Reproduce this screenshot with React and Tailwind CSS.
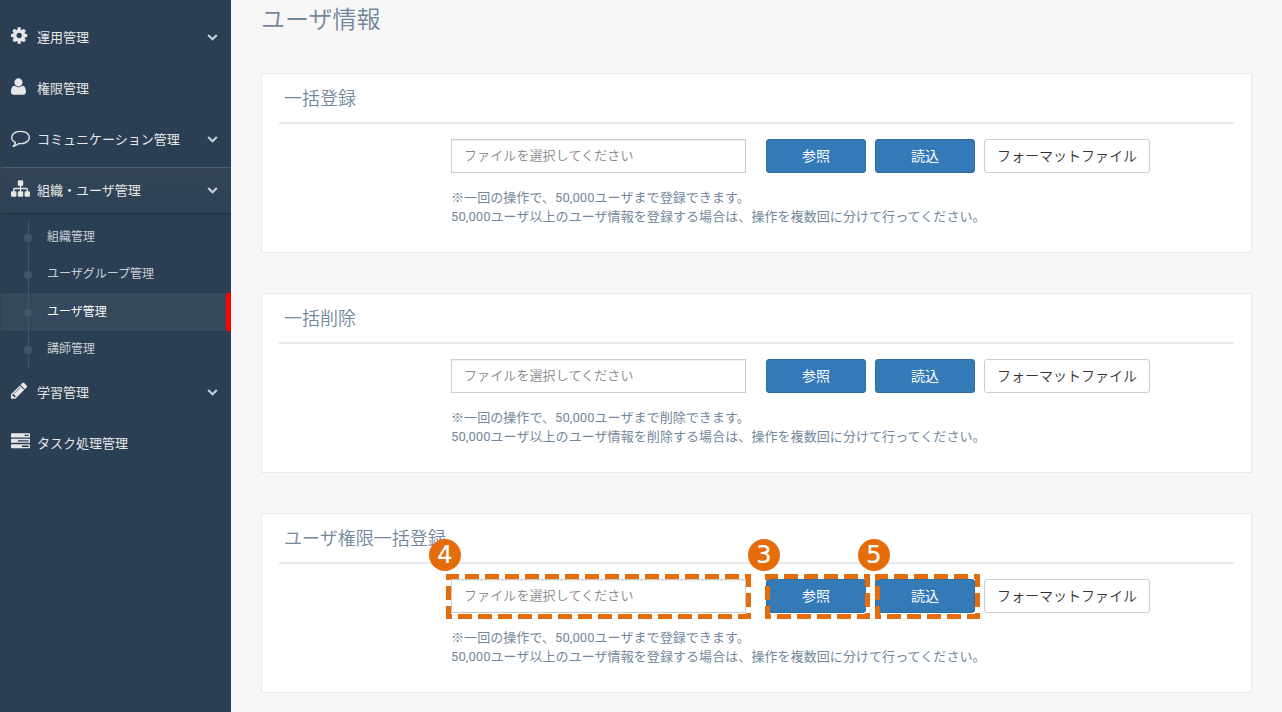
import { useState } from "react"

const icons = {
    cog: "M1152 896q0-106-75-181t-181-75-181 75-75 181 75 181 181 75 181-75 75-181zm512-109v222q0 12-8 23t-20 13l-185 28q-19 54-39 91 35 50 107 138 10 12 10 25t-9 23q-27 37-99 108t-94 71q-12 0-26-9l-138-108q-44 23-91 38-16 136-29 186-7 28-36 28h-222q-14 0-24.5-8.5t-11.5-21.5l-28-184q-49-16-90-37l-141 107q-10 9-25 9-14 0-25-11-126-114-165-168-7-10-7-23 0-12 8-23 15-21 51-66.5t54-70.5q-27-50-41-99l-183-27q-13-2-21-12.5t-8-23.5v-222q0-12 8-23t19-13l186-28q14-46 39-92-40-57-107-138-10-12-10-24 0-10 9-23 26-36 98.5-107.5t94.5-71.5q13 0 26 10l138 107q44-23 91-38 16-136 29-186 7-28 36-28h222q14 0 24.5 8.5t11.5 21.5l28 184q49 16 90 37l142-107q9-9 24-9 13 0 25 10 129 119 165 170 7 8 7 22 0 12-8 23-15 21-51 66.5t-54 70.5q26 50 41 98l183 28q13 2 21 12.5t8 23.5z",
    user: "M1600 1405q0 120-73 189.5t-194 69.5h-874q-121 0-194-69.5t-73-189.5q0-53 3.500-103.500t14-109 26.500-108.500 43-97.500 62-81 85.500-53.500 111.500-20q9 0 42 21.500t74.500 48 108 48 133.500 21.500 133.500-21.500 108-48 74.500-48 42-21.500q61 0 111.500 20t85.500 53.500 62 81 43 97.500 26.500 108.500 14 109 3.500 103.500zm-320-893q0 159-112.500 271.500t-271.500 112.500-271.500-112.500-112.500-271.500 112.500-271.500 271.500-112.500 271.500 112.500 112.500 271.500z",
    comment: "M896 384q-204 0-381.5 69.5t-282 187.5-104.5 255q0 112 71.5 213.5t201.5 175.5l87 50-27 96q-24 91-70 172 152-63 275-171l43-38 57 6q69 8 130 8 204 0 381.5-69.5t282-187.5 104.5-255-104.5-255-282-187.5-381.5-69.5zm896 512q0 174-120 321.5t-326 233-450 85.5q-70 0-145-8-198 175-460 242-49 14-114 22h-5q-15 0-27-10.5t-16-27.5v-1q-3-4-.5-12t2-10 4.5-9.5l6-9 7-8.5 8-9q7-8 31-34.5t34.5-38 31-39.5 32.5-51 27-59 26-76q-157-89-247.5-220t-90.5-281q0-174 120-321.5t326-233 450-85.5 450 85.5 326 233 120 321.5z",
    sitemap: "M1792 1248v320q0 40-28 68t-68 28h-320q-40 0-68-28t-28-68v-320q0-40 28-68t68-28h96v-192h-512v192h96q40 0 68 28t28 68v320q0 40-28 68t-68 28h-320q-40 0-68-28t-28-68v-320q0-40 28-68t68-28h96v-192h-512v192h96q40 0 68 28t28 68v320q0 40-28 68t-68 28h-320q-40 0-68-28t-28-68v-320q0-40 28-68t68-28h96v-192q0-52 38-90t90-38h512v-192h-96q-40 0-68-28t-28-68v-320q0-40 28-68t68-28h320q40 0 68 28t28 68v320q0 40-28 68t-68 28h-96v192h512q52 0 90 38t38 90v192h96q40 0 68 28t28 68z",
    pencil: "M491 1536l91-91-235-235-91 91v107h128v128h107zm523-928q0-22-22-22-10 0-17 7l-542 542q-7 7-7 17 0 22 22 22 10 0 17-7l542-542q7-7 7-17zm-54-192l416 416-832 832h-416v-416zm683 96q0 53-37 90l-166 166-416-416 166-165q36-38 90-38 53 0 91 38l235 234q37 39 37 91z",
    tasks: "M1024 1408h640v-128h-640v128zm-384-512h1024v-128h-1024v128zm640-512h384v-128h-384v128zm512 832v256q0 26-19 45t-45 19h-1664q-26 0-45-19t-19-45v-256q0-26 19-45t45-19h1664q26 0 45 19t19 45zm0-512v256q0 26-19 45t-45 19h-1664q-26 0-45-19t-19-45v-256q0-26 19-45t45-19h1664q26 0 45 19t19 45zm0-512v256q0 26-19 45t-45 19h-1664q-26 0-45-19t-19-45v-256q0-26 19-45t45-19h1664q26 0 45 19t19 45z",
    chevron: "M1683 808l-742 741q-19 19-45 19t-45-19l-742-741q-19-19-19-45.5t19-45.5l166-165q19-19 45-19t45 19l531 531 531-531q19-19 45-19t45 19l166 165q19 19 19 45.5t-19 45.5z",
}

// x = left edge of the glyph inside the 1792 grid
const menu = [
    { label: "運用管理", icon: "cog", x: 128, sub: true },
    { label: "権限管理", icon: "user", x: 192 },
    { label: "コミュニケーション管理", icon: "comment", x: 0, sub: true },
    {
        label: "組織・ユーザ管理",
        icon: "sitemap",
        x: 0,
        sub: true,
        children: ["組織管理", "ユーザグループ管理", "ユーザ管理", "講師管理"],
    },
    { label: "学習管理", icon: "pencil", x: 128, sub: true },
    { label: "タスク処理管理", icon: "tasks", x: 0 },
]

const panels = [
    { title: "一括登録", action: "登録" },
    { title: "一括削除", action: "削除" },
    { title: "ユーザ権限一括登録", action: "登録", guide: true },
]

function Icon({ name, x = 0, className }) {
    return (
        <svg
            viewBox={`${x} 0 1792 1792`}
            fill="currentColor"
            className={className}
        >
            <path d={icons[name]} />
        </svg>
    )
}

function MenuItem({ item, current, setCurrent }) {
    const open = Boolean(item.children)
    return (
        <li>
            <button
                className={`flex h-[47px] w-full items-center border-y pl-[9.5px] pr-[13.5px] text-left text-[13px] text-[#e7e7e7] ${
                    open
                        ? "border-t-[#4c6072] border-b-[#1f2f40] bg-linear-to-b from-[#334556] to-[#2c4257]"
                        : "mb-1 border-transparent"
                }`}
            >
                <Icon
                    name={item.icon}
                    x={item.x}
                    className="-mt-1 h-[19px] w-[19px]"
                />
                <span className="ml-[7.5px] flex-1">{item.label}</span>
                {item.sub && (
                    <Icon
                        name="chevron"
                        className="-mt-[3px] h-[11px] w-[11px] text-[#c4cfda]"
                    />
                )}
            </button>
            {open && (
                <ul className="relative mt-1 mb-px before:absolute before:top-[2px] before:bottom-0 before:left-[27px] before:z-10 before:w-px before:bg-[#425668]">
                    {item.children.map((label) => (
                        <li
                            key={label}
                            onClick={() => setCurrent(label)}
                            className={`relative flex h-[37.5px] items-center border-r-[5px] pl-[46px] text-xs before:absolute before:left-[23px] before:top-[15.5px] before:h-2 before:w-2 before:rounded-full before:bg-[#425668] ${
                                current === label
                                    ? "border-[#ff0000] bg-[#35495d] text-white"
                                    : "border-transparent text-white/75"
                            }`}
                        >
                            {label}
                        </li>
                    ))}
                </ul>
            )}
        </li>
    )
}

function Callout({ number, frame, line, badge }) {
    return (
        <>
            <svg
                className={`pointer-events-none absolute -top-[5px] h-[45px] ${frame}`}
                fill="none"
                stroke="#e46c0a"
                strokeWidth="5"
                strokeDasharray="14 6"
                strokeDashoffset="3.5"
            >
                <rect x="2.5" y="2.5" width={line} height="40" />
            </svg>
            <span
                className={`absolute -top-[40px] flex h-8 w-8 items-center justify-center rounded-full bg-[#e46c0a] pb-px font-['DejaVu_Sans',sans-serif] text-2xl text-white [-webkit-text-stroke:0.2px_white] ${badge}`}
            >
                {number}
            </span>
        </>
    )
}

function Panel({ title, action, guide }) {
    return (
        <section className="h-[180px] border border-[#e6e9ed] bg-white px-[17px]">
            <h3 className="h-[50px] border-b-2 border-[#e6e9ed] pl-[5px] text-lg leading-[50px] font-[350]">
                {title}
            </h3>
            <div className="mt-[15px] ml-[172px] flex">
                <div className="relative mr-5">
                    <input
                        placeholder="ファイルを選択してください"
                        className="h-[34px] w-[295px] border border-[#ccc] px-3 pb-[2px] text-[13px] tracking-[0.1px] shadow-[inset_0_1px_1px_rgba(0,0,0,0.075)] placeholder:font-[350] placeholder:text-[#888]"
                    />
                    {guide && (
                        <Callout
                            number="4"
                            line="300"
                            frame="-left-[5px] w-[305px]"
                            badge="-left-[22px]"
                        />
                    )}
                </div>
                <div className="relative mr-[9px]">
                    <button className="h-[34px] w-[100px] rounded-[3px] border border-[#2e6da4] bg-[#337ab7] text-sm text-white">
                        参照
                    </button>
                    {guide && (
                        <Callout
                            number="3"
                            line="100"
                            frame="-left-px w-[105px]"
                            badge="-left-[18px]"
                        />
                    )}
                </div>
                <div className="relative mr-[9px]">
                    <button className="h-[34px] w-[100px] rounded-[3px] border border-[#2e6da4] bg-[#337ab7] text-sm text-white">
                        読込
                    </button>
                    {guide && (
                        <Callout
                            number="5"
                            line="100"
                            frame="left-0 w-[105px]"
                            badge="-left-[17px]"
                        />
                    )}
                </div>
                <button className="h-[34px] w-[166px] rounded-[3px] border border-[#ccc] bg-white text-sm font-[350] text-[#333]">
                    フォーマットファイル
                </button>
            </div>
            <p className="mt-[15px] ml-[172px] text-[13px] leading-[19px] tracking-[0.07px]">
                ※一回の操作で、50,000ユーザまで{action}できます。
                <br />
                50,000ユーザ以上のユーザ情報を{action}
                する場合は、操作を複数回に分けて行ってください。
            </p>
        </section>
    )
}

export default function App() {
    const [current, setCurrent] = useState("ユーザ管理")

    return (
        <div className="flex h-[712px] overflow-hidden bg-[#f7f7f7] font-[Roboto,'Noto_Sans_CJK_JP',sans-serif] text-[#73879c]">
            <nav className="w-[231px] shrink-0 border-l border-[#3a3f44] bg-[#2a3f54] pt-[14px]">
                <ul>
                    {menu.map((item) => (
                        <MenuItem
                            key={item.label}
                            item={item}
                            current={current}
                            setCurrent={setCurrent}
                        />
                    ))}
                </ul>
            </nav>
            <main className="flex-1 pr-[30px] pl-[30px]">
                <h1 className="mb-[33px] h-10 text-2xl leading-10 font-[350]">
                    ユーザ情報
                </h1>
                <div className="flex flex-col gap-10">
                    {panels.map((panel) => (
                        <Panel key={panel.title} {...panel} />
                    ))}
                </div>
            </main>
        </div>
    )
}
